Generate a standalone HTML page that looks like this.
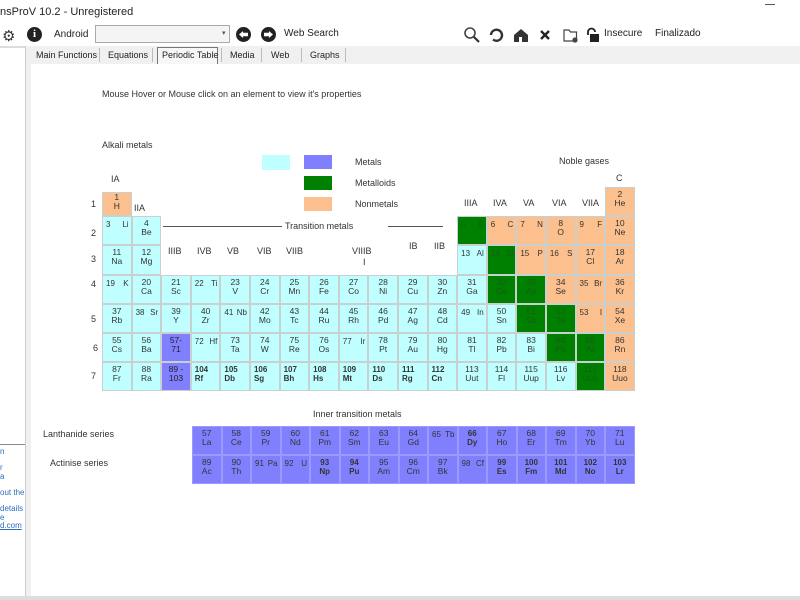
<!DOCTYPE html>
<html><head><meta charset="utf-8">
<style>
*{margin:0;padding:0;box-sizing:border-box}
body{width:800px;height:600px;overflow:hidden;background:#fff;font-family:"Liberation Sans",Arial,sans-serif;color:#222;position:relative}
.a{position:absolute;white-space:nowrap}
.t{font-size:9px;color:#333}
.pt{position:absolute;left:102px;top:187px;display:grid;grid-template-columns:repeat(18,29.6px);grid-template-rows:repeat(7,29.2px)}
.ln{position:absolute;left:192px;top:426px;display:grid;grid-template-columns:repeat(15,29.5px);grid-template-rows:repeat(2,29px);background:#8080ff}
.pt div,.ln div{border:1px solid #c8d0d0;font-size:8.5px;line-height:9px;text-align:center;padding-top:2px;color:#333;white-space:nowrap;overflow:hidden}
.pt div.e{border:none;background:none}
.c{background:#c0ffff}.o{background:#fbc08e}.g{background:#008000;color:#1a5a1a!important}.p{background:#8080ff;color:#222!important}
.pt div.i,.ln div.i{text-align:justify;text-align-last:justify;padding-left:3px;padding-right:2px;padding-top:3px;white-space:normal;font-size:8px}
.pt div.b,.ln div.b{font-weight:bold;text-align:left;padding-left:3px;font-size:8px}
.ln div{border-color:#9a9aff}
.ln div.b{text-align:center;padding-left:0}
</style></head><body>
<div class="a" style="left:0;top:6px;font-size:11px;color:#222">nsProV 10.2 - Unregistered</div>
<div class="a" style="left:765px;top:4px;width:10px;height:1px;background:#555"></div>
<div class="a" style="left:2px;top:27px;font-size:15px;color:#333">⚙</div>
<div class="a" style="left:27px;top:27px;width:15px;height:15px;border-radius:50%;background:#222;color:#fff;font-size:11px;font-weight:bold;text-align:center;line-height:15px;font-family:'Liberation Serif',serif">i</div>
<div class="a" style="left:54px;top:29px;font-size:10px">Android</div>
<div class="a" style="left:95px;top:25px;width:135px;height:18px;border:1px solid #aaa;background:#f4f4f4"></div>
<div class="a" style="left:222px;top:29px;font-size:7px;color:#555">▾</div>
<div class="a" style="left:236px;top:27px;width:15px;height:15px;border-radius:50%;background:#222"></div>
<div class="a" style="left:239px;top:31px;width:9px;height:7px;background:#fff;clip-path:polygon(0 50%,45% 0,45% 25%,100% 25%,100% 75%,45% 75%,45% 100%)"></div>
<div class="a" style="left:261px;top:27px;width:15px;height:15px;border-radius:50%;background:#222"></div>
<div class="a" style="left:264px;top:31px;width:9px;height:7px;background:#fff;clip-path:polygon(100% 50%,55% 0,55% 25%,0 25%,0 75%,55% 75%,55% 100%)"></div>
<div class="a" style="left:284px;top:28px;font-size:10px">Web Search</div>
<svg class="a" style="left:463px;top:26px" width="160" height="18" viewBox="0 0 160 18">
<circle cx="7" cy="7" r="5" fill="none" stroke="#444" stroke-width="1.6"/><line x1="11" y1="11" x2="16" y2="16" stroke="#333" stroke-width="2.2"/>
<path d="M28 9a5.5 5.5 0 1 1 2 4.5" fill="none" stroke="#333" stroke-width="2.4"/>
<path d="M51 9l7-6 7 6v7h-14z" fill="#333"/><rect x="56" y="11" width="3" height="5" fill="#fff"/>
<path d="M78 5l8 8M86 5l-8 8" stroke="#222" stroke-width="2.4"/>
<path d="M101 4h5l1.5 2h6v9h-12.5z" fill="none" stroke="#444" stroke-width="1.2"/><circle cx="112" cy="14" r="2.6" fill="#444"/>
<path d="M125 9v-3a3.5 3.5 0 0 1 7 0" fill="none" stroke="#222" stroke-width="1.8"/><rect x="127" y="8" width="9" height="8" fill="#222"/>
</svg>
<div class="a" style="left:604px;top:28px;font-size:10px">Insecure</div>
<div class="a" style="left:655px;top:28px;font-size:10px">Finalizado</div>
<div class="a" style="left:26px;top:46px;width:774px;height:18px;background:#f0f0f0"></div>
<div class="a" style="left:0;top:46px;width:26px;height:2px;background:#ddd"></div>
<div class="a" style="left:36px;top:50px;font-size:9px">Main Functions</div>
<div class="a" style="left:99px;top:48px;width:1px;height:14px;background:#bbb"></div>
<div class="a" style="left:108px;top:50px;font-size:9px">Equations</div>
<div class="a" style="left:152px;top:48px;width:1px;height:14px;background:#bbb"></div>
<div class="a" style="left:157px;top:47px;width:61px;height:17px;border:1px solid #777;border-bottom:none;background:#f7f7f7"></div>
<div class="a" style="left:162px;top:50px;font-size:9px">Periodic Table</div>
<div class="a" style="left:221px;top:48px;width:1px;height:14px;background:#bbb"></div>
<div class="a" style="left:230px;top:50px;font-size:9px">Media</div>
<div class="a" style="left:261px;top:48px;width:1px;height:14px;background:#bbb"></div>
<div class="a" style="left:271px;top:50px;font-size:9px">Web</div>
<div class="a" style="left:301px;top:48px;width:1px;height:14px;background:#bbb"></div>
<div class="a" style="left:310px;top:50px;font-size:9px">Graphs</div>
<div class="a" style="left:345px;top:48px;width:1px;height:14px;background:#bbb"></div>
<div class="a" style="left:25px;top:46px;width:1px;height:554px;background:#ccc"></div>
<div class="a" style="left:26px;top:64px;width:5px;height:536px;background:#f0f0f0"></div>
<div class="a" style="left:0;top:444px;width:25px;height:1px;background:#888"></div>
<div class="a" style="left:0;top:448px;font-size:8px;color:#2a6fc0;line-height:8.2px">n<br><br>r<br>a<br><br>out the<br><br>details<br>e<br><u>d.com</u></div>
<div class="a" style="left:0;top:596px;width:800px;height:4px;background:#ddd"></div>
<div class="a t" style="left:102px;top:89px">Mouse Hover or Mouse click on an element to view it's properties</div>
<div class="a t" style="left:102px;top:140px">Alkali metals</div>
<div class="a" style="left:262px;top:155px;width:28px;height:15px;background:#c0ffff"></div>
<div class="a" style="left:304px;top:155px;width:28px;height:14px;background:#8080ff"></div>
<div class="a" style="left:304px;top:176px;width:28px;height:14px;background:#008000"></div>
<div class="a" style="left:304px;top:197px;width:28px;height:14px;background:#fbc08e"></div>
<div class="a t" style="left:355px;top:157px">Metals</div>
<div class="a t" style="left:355px;top:178px">Metalloids</div>
<div class="a t" style="left:355px;top:199px">Nonmetals</div>
<div class="a t" style="left:559px;top:156px">Noble gases</div>
<div class="a t" style="left:616px;top:173px">C</div>
<div class="a t" style="left:111px;top:174px">IA</div>
<div class="a t" style="left:134px;top:203px">IIA</div>
<div class="a t" style="left:91px;top:199px">1</div>
<div class="a t" style="left:91px;top:228px">2</div>
<div class="a t" style="left:91px;top:254px">3</div>
<div class="a t" style="left:91px;top:279px">4</div>
<div class="a t" style="left:91px;top:314px">5</div>
<div class="a t" style="left:93px;top:343px">6</div>
<div class="a t" style="left:91px;top:371px">7</div>
<div class="a" style="left:163px;top:226px;width:119px;height:1px;background:#555"></div>
<div class="a t" style="left:285px;top:221px">Transition metals</div>
<div class="a" style="left:388px;top:226px;width:55px;height:1px;background:#555"></div>
<div class="a t" style="left:168px;top:246px">IIIB</div>
<div class="a t" style="left:197px;top:246px">IVB</div>
<div class="a t" style="left:227px;top:246px">VB</div>
<div class="a t" style="left:257px;top:246px">VIB</div>
<div class="a t" style="left:286px;top:246px">VIIB</div>
<div class="a t" style="left:352px;top:246px">VIIIB</div>
<div class="a t" style="left:363px;top:257px">I</div>
<div class="a t" style="left:409px;top:241px">IB</div>
<div class="a t" style="left:434px;top:241px">IIB</div>
<div class="a t" style="left:464px;top:198px">IIIA</div>
<div class="a t" style="left:493px;top:198px">IVA</div>
<div class="a t" style="left:523px;top:198px">VA</div>
<div class="a t" style="left:552px;top:198px">VIA</div>
<div class="a t" style="left:582px;top:198px">VIIA</div>
<div class="pt">
<div class="o" style="margin-top:5px;padding-top:0">1<br>H</div><div class="e"></div><div class="e"></div><div class="e"></div><div class="e"></div><div class="e"></div><div class="e"></div><div class="e"></div><div class="e"></div><div class="e"></div><div class="e"></div><div class="e"></div><div class="e"></div><div class="e"></div><div class="e"></div><div class="e"></div><div class="e"></div>
<div class="o">2<br>He</div>
<div class="c i">3 Li</div><div class="c">4<br>Be</div><div class="e"></div><div class="e"></div><div class="e"></div><div class="e"></div><div class="e"></div><div class="e"></div><div class="e"></div><div class="e"></div><div class="e"></div><div class="e"></div>
<div class="g i">5 B</div><div class="o i">6 C</div><div class="o i">7 N</div><div class="o">8<br>O</div><div class="o i">9 F</div><div class="o">10<br>Ne</div>
<div class="c">11<br>Na</div><div class="c">12<br>Mg</div><div class="e"></div><div class="e"></div><div class="e"></div><div class="e"></div><div class="e"></div><div class="e"></div><div class="e"></div><div class="e"></div><div class="e"></div><div class="e"></div>
<div class="c i">13 Al</div><div class="g i">14 Si</div><div class="o i">15 P</div><div class="o i">16 S</div><div class="o">17<br>Cl</div><div class="o">18<br>Ar</div>
<div class="c i">19 K</div><div class="c">20<br>Ca</div><div class="c">21<br>Sc</div><div class="c i">22 Ti</div><div class="c">23<br>V</div><div class="c">24<br>Cr</div><div class="c">25<br>Mn</div><div class="c">26<br>Fe</div><div class="c">27<br>Co</div><div class="c">28<br>Ni</div><div class="c">29<br>Cu</div><div class="c">30<br>Zn</div><div class="c">31<br>Ga</div><div class="g">32<br>Ge</div><div class="g">33<br>As</div><div class="o">34<br>Se</div><div class="o i">35 Br</div><div class="o">36<br>Kr</div>
<div class="c">37<br>Rb</div><div class="c i">38 Sr</div><div class="c">39<br>Y</div><div class="c">40<br>Zr</div><div class="c i">41 Nb</div><div class="c">42<br>Mo</div><div class="c">43<br>Tc</div><div class="c">44<br>Ru</div><div class="c">45<br>Rh</div><div class="c">46<br>Pd</div><div class="c">47<br>Ag</div><div class="c">48<br>Cd</div><div class="c i">49 In</div><div class="c">50<br>Sn</div><div class="g">51<br>Sb</div><div class="g">52<br>Te</div><div class="o i">53 I</div><div class="o">54<br>Xe</div>
<div class="c">55<br>Cs</div><div class="c">56<br>Ba</div><div class="p">57-<br>71</div><div class="c i">72 Hf</div><div class="c">73<br>Ta</div><div class="c">74<br>W</div><div class="c">75<br>Re</div><div class="c">76<br>Os</div><div class="c i">77 Ir</div><div class="c">78<br>Pt</div><div class="c">79<br>Au</div><div class="c">80<br>Hg</div><div class="c">81<br>Tl</div><div class="c">82<br>Pb</div><div class="c">83<br>Bi</div><div class="g">84<br>Po</div><div class="g">85<br>At</div><div class="o">86<br>Rn</div>
<div class="c">87<br>Fr</div><div class="c">88<br>Ra</div><div class="p">89 -<br>103</div><div class="c b">104<br>Rf</div><div class="c b">105<br>Db</div><div class="c b">106<br>Sg</div><div class="c b">107<br>Bh</div><div class="c b">108<br>Hs</div><div class="c b">109<br>Mt</div><div class="c b">110<br>Ds</div><div class="c b">111<br>Rg</div><div class="c b">112<br>Cn</div><div class="c">113<br>Uut</div><div class="c">114<br>Fl</div><div class="c">115<br>Uup</div><div class="c">116<br>Lv</div><div class="g">117<br>Uus</div><div class="o">118<br>Uuo</div>
</div>
<div class="a t" style="left:313px;top:409px">Inner transition metals</div>
<div class="a t" style="left:43px;top:429px">Lanthanide series</div>
<div class="a t" style="left:50px;top:458px">Actinise series</div>
<div class="ln">
<div>57<br>La</div><div>58<br>Ce</div><div>59<br>Pr</div><div>60<br>Nd</div><div>61<br>Pm</div><div>62<br>Sm</div><div>63<br>Eu</div><div>64<br>Gd</div><div class="i">65 Tb</div><div class="b">66<br>Dy</div><div>67<br>Ho</div><div>68<br>Er</div><div>69<br>Tm</div><div>70<br>Yb</div><div>71<br>Lu</div>
<div>89<br>Ac</div><div>90<br>Th</div><div class="i">91 Pa</div><div class="i">92 U</div><div class="b">93<br>Np</div><div class="b">94<br>Pu</div><div>95<br>Am</div><div>96<br>Cm</div><div>97<br>Bk</div><div class="i">98 Cf</div><div class="b">99<br>Es</div><div class="b">100<br>Fm</div><div class="b">101<br>Md</div><div class="b">102<br>No</div><div class="b">103<br>Lr</div>
</div>
</body></html>
